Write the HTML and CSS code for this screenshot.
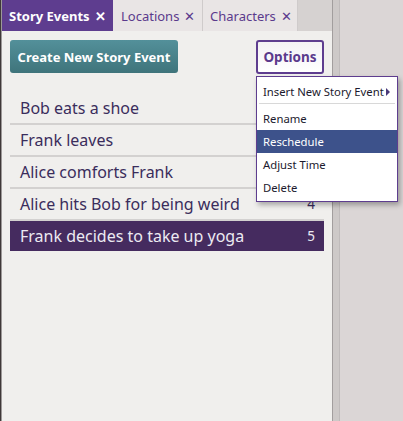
FILE: index.html
```html
<!DOCTYPE html>
<html>
<head>
<meta charset="utf-8">
<link rel="stylesheet" href="styles.css">
</head>
<body>
<div class="app">
  <div class="edge"></div>
  <div class="panel">
    <div class="tabbar">
      <div class="tab active">Story Events <span class="x">✕</span></div>
      <div class="tab">Locations <span class="x">✕</span></div>
      <div class="tab">Characters <span class="x">✕</span></div>
    </div>
    <div class="content">
      <div class="toolbar">
        <button class="btn-create">Create New Story Event</button>
        <button class="btn-options">Options</button>
      </div>
      <ul class="events">
        <li class="event"><span class="name">Bob eats a shoe</span></li>
        <li class="event"><span class="name">Frank leaves</span></li>
        <li class="event"><span class="name">Alice comforts Frank</span></li>
        <li class="event"><span class="name">Alice hits Bob for being weird</span><span class="num">4</span></li>
        <li class="event selected"><span class="name">Frank decides to take up yoga</span><span class="num">5</span></li>
      </ul>
    </div>
  </div>
  <div class="divider"></div>
  <div class="side"></div>
</div>
<div class="menu">
  <div class="item submenu">Insert New Story Event <span class="arrow"></span></div>
  <div class="sep"></div>
  <div class="item">Rename</div>
  <div class="item hover">Reschedule</div>
  <div class="item">Adjust Time</div>
  <div class="item">Delete</div>
</div>
</body>
</html>
```
FILE: styles.css
```css
html, body {
  margin: 0;
  padding: 0;
  width: 403px;
  height: 421px;
  overflow: hidden;
  font-family: "Noto Sans", "Open Sans", sans-serif;
}
.app {
  display: flex;
  height: 421px;
}
.edge {
  width: 1px;
  background: #3e3838;
  border-right: 1px solid #9c9898;
}
.panel {
  width: 330px;
  display: flex;
  flex-direction: column;
  background: #f0efed;
}
.tabbar {
  height: 31px;
  display: flex;
  background: #d6d2d1;
}
.tab {
  box-sizing: border-box;
  height: 31px;
  display: flex;
  align-items: center;
  padding-left: 7px;
  font-size: 13px;
  color: #5b3a8c;
  background: #e9e5e5;
  border-right: 1px solid #cfcbcb;
  white-space: nowrap;
}
.tab .x {
  font-size: 13px;
  margin-left: 5px;
}
.tab.active {
  width: 111px;
  background: #5e3d8f;
  color: #fff;
  font-weight: bold;
  border-right: none;
}
.tab:nth-child(2) { width: 90px; padding-left: 8px; }
.tab:nth-child(3) { width: 95px; }
.content {
  flex: 1;
  padding: 9px 8px 0 8px;
}
.toolbar {
  display: flex;
  justify-content: space-between;
  height: 33px;
}
.btn-create {
  width: 168px;
  height: 33px;
  border: none;
  border-radius: 3px;
  background: linear-gradient(#53909a, #3f747b);
  color: #fff;
  font-family: inherit;
  font-weight: bold;
  font-size: 13px;
  padding: 0;
}
.btn-options {
  width: 68px;
  height: 34px;
  box-sizing: border-box;
  border: 2px solid #5e3d8f;
  border-radius: 3px;
  background: linear-gradient(#f3f1f4, #ffffff);
  color: #5b3a8c;
  font-family: inherit;
  font-weight: bold;
  font-size: 13.5px;
  padding: 0;
}
.events {
  list-style: none;
  margin: 20px 0 0 0;
  padding: 0;
}
.event {
  height: 30px;
  display: flex;
  align-items: center;
  justify-content: space-between;
  padding: 0 9px 0 10px;
  border-bottom: 2px solid #d3d1d0;
  color: #3a2d5c;
  font-size: 16px;
}
.event:last-child { border-bottom: none; }
.event .num {
  font-size: 13.5px;
}
.event.selected {
  background: #452b5f;
  color: #eceaf2;
}
.divider {
  width: 6px;
  background: #cdc9c8;
  border-left: 1px solid #a29e9e;
  border-right: 1px solid #bfbbbb;
}
.side {
  flex: 1;
  background: #dbd6d6;
}
.menu {
  position: absolute;
  left: 256px;
  top: 76px;
  width: 140px;
  background: #fff;
  border: 1px solid #5e3d8f;
  box-shadow: 2px 3px 5px rgba(0,0,0,0.3);
  padding: 3px 0 2px 0;
  font-size: 11.3px;
  color: #1c1a2e;
}
.item {
  height: 23px;
  display: flex;
  align-items: center;
  padding-left: 6px;
  position: relative;
}
.item.hover {
  background: #3d528b;
  color: #fff;
}
.arrow {
  position: absolute;
  right: 7px;
  top: 8px;
  width: 0;
  height: 0;
  border-top: 4px solid transparent;
  border-bottom: 4px solid transparent;
  border-left: 4px solid #4a3a7a;
}
.sep {
  height: 1px;
  margin: 0 2px 3px 2px;
  background: #d8d8d8;
}
```
